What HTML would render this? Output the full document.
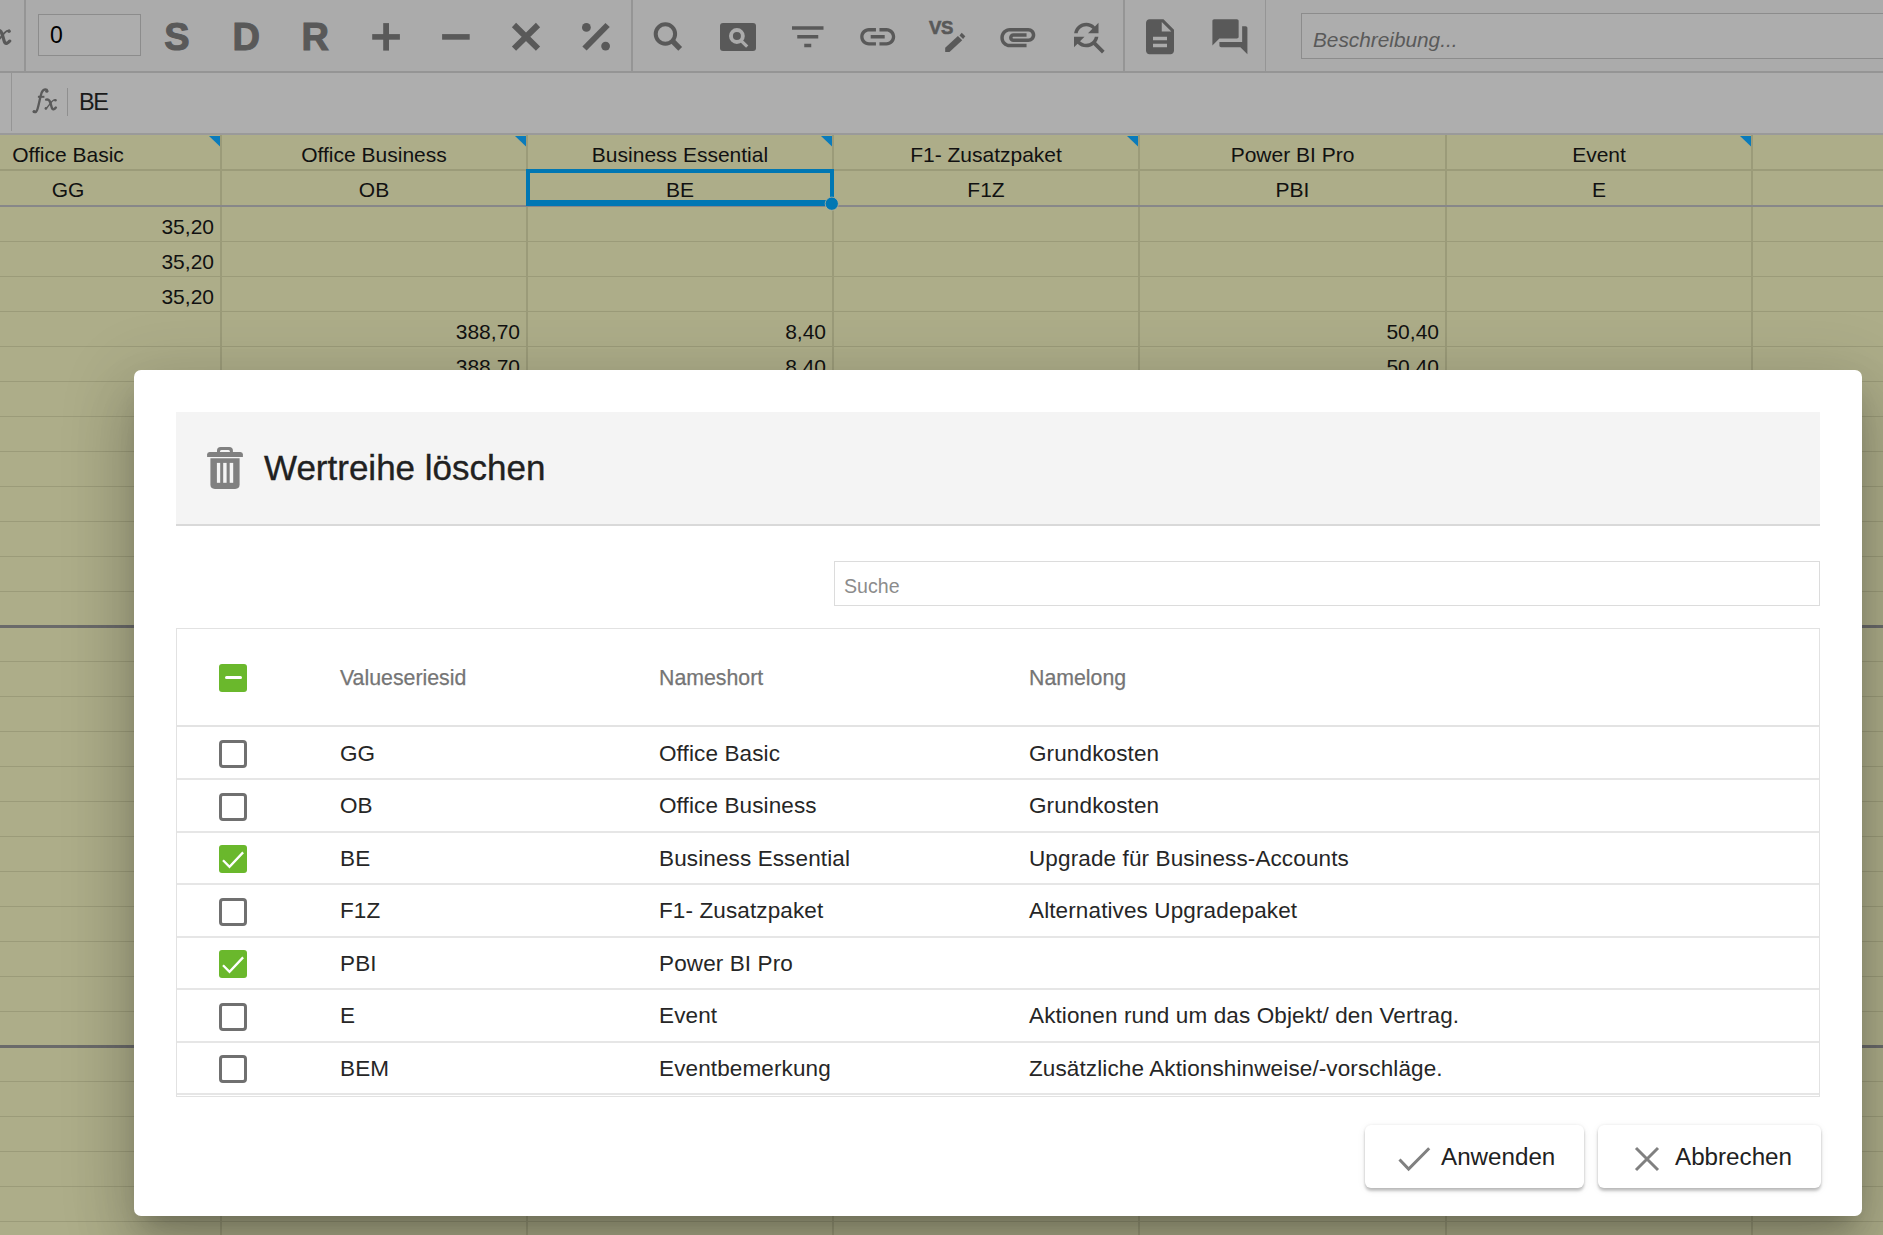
<!DOCTYPE html>
<html><head><meta charset="utf-8">
<style>
html,body{margin:0;padding:0;}
body{width:1883px;height:1235px;overflow:hidden;position:relative;background:#adad89;font-family:"Liberation Sans",sans-serif;}
.a{position:absolute;}
.t{position:absolute;white-space:nowrap;}
svg{position:absolute;overflow:visible;}
</style></head><body>
<div class="a" style="left:0;top:0;width:1883px;height:71px;background:#ababab;border-bottom:2px solid #959595"></div>
<div class="a" style="left:24px;top:0;width:2px;height:71px;background:#959595"></div>
<div class="a" style="left:631px;top:0;width:2px;height:71px;background:#959595"></div>
<div class="a" style="left:1123px;top:0;width:2px;height:71px;background:#959595"></div>
<div class="a" style="left:1265px;top:0;width:1.3px;height:71px;background:#959595"></div>
<svg style="left:0;top:0" width="1" height="1"><g transform="translate(-4.4 29.9) scale(1.33) translate(-45.3 -99.2)"><path d="M46.2 99.6 Q48.3 99.0 49.4 100.6 Q50.6 103 51.6 107 Q52.3 109.6 53.6 109.3 Q54.8 109 55.9 107.6" stroke="#595959" stroke-width="2.4" fill="none" stroke-linecap="round"/><path d="M55.6 99.6 Q53.6 99.6 51.8 101.6 L47.6 106.8 Q46.6 108.4 45.6 108.6" stroke="#595959" stroke-width="1.4" fill="none" stroke-linecap="round"/><circle cx="55.4" cy="100.2" r="1.3" fill="#595959"/><circle cx="45.9" cy="108.4" r="1.3" fill="#595959"/></g></svg>
<div class="a" style="left:38px;top:14px;width:101px;height:40px;border:1px solid #8c8c8c;background:#adadad"></div>
<div class="t" style="left:50px;top:19.93px;font-size:23px;line-height:30px;color:#000;">0</div>
<div class="t" style="left:164.2px;top:12.83px;font-size:38px;line-height:49px;color:#595959;font-weight:bold;-webkit-text-stroke:1.1px #595959;">S</div>
<div class="t" style="left:232.4px;top:12.83px;font-size:38px;line-height:49px;color:#595959;font-weight:bold;-webkit-text-stroke:1.1px #595959;">D</div>
<div class="t" style="left:301.6px;top:12.83px;font-size:38px;line-height:49px;color:#595959;font-weight:bold;-webkit-text-stroke:1.1px #595959;">R</div>
<svg style="left:0;top:0" width="1883" height="73"><g fill="#595959"><rect x="383.2" y="23.1" width="5.8" height="27.5"/><rect x="372.2" y="34.1" width="27.7" height="5.6"/><rect x="442.1" y="34.1" width="27.6" height="5.6"/></g><g stroke="#595959" stroke-width="6" fill="none"><path d="M514 25 L538 48.6 M538 25 L514 48.6"/><path d="M584.5 48.5 L607.6 25"/></g><g fill="#595959"><circle cx="586.4" cy="27.4" r="4.4"/><circle cx="605.6" cy="46.1" r="4.4"/></g></svg>
<svg style="left:0;top:0" width="1" height="1"><circle cx="665.4" cy="34" r="9.7" stroke="#595959" stroke-width="4" fill="none"/><path d="M672.6 41.2 L680.2 48.8" stroke="#595959" stroke-width="5.4"/></svg>
<div class="a" style="left:720.2px;top:23px;width:35.4px;height:28px;background:#595959;border-radius:3px"></div>
<svg style="left:0;top:0" width="1" height="1"><circle cx="736.9" cy="36" r="5.95" stroke="#ababab" stroke-width="3.9" fill="none"/><path d="M741.3 40.8 L747.2 46.7" stroke="#ababab" stroke-width="3.2"/></svg>
<svg style="left:0;top:0" width="1" height="1"><path transform="translate(786.75 15.8) scale(1.75)" d="M10 18h4v-2h-4v2zM3 6v2h18V6H3zm3 7h12v-2H6v2z" fill="#595959"/></svg>
<svg style="left:0;top:0" width="1" height="1"><path transform="translate(856.7 15.85) scale(1.75)" d="M3.9 12c0-1.71 1.39-3.1 3.1-3.1h4V7H7c-2.76 0-5 2.24-5 5s2.24 5 5 5h4v-1.9H7c-1.71 0-3.1-1.39-3.1-3.1zM8 13h8v-2H8v2zm9-6h-4v1.9h4c1.71 0 3.1 1.39 3.1 3.1s-1.39 3.1-3.1 3.1h-4V17h4c2.76 0 5-2.24 5-5s-2.24-5-5-5z" fill="#595959"/></svg>
<div class="t" style="left:929px;top:16.49px;font-size:18.5px;line-height:24px;color:#595959;font-weight:bold;letter-spacing:-0.3px;-webkit-text-stroke:0.6px #595959;">VS</div>
<svg style="left:0;top:0" width="1" height="1"><path d="M945.2 47.8 L957.9 36.0 L962.2 40.3 L949.5 52 L945.2 52 Z" fill="#595959"/><path d="M961.7 32.8 L965.3 36.2 L963.1 38.9 L959.5 35.4 Z" fill="#595959"/></svg>
<svg style="left:0;top:0" width="1" height="1"><path transform="translate(996.8 15.85) scale(1.75)" d="M2 12.5C2 9.46 4.46 7 7.5 7H18c2.21 0 4 1.79 4 4s-1.79 4-4 4H9.5C8.12 15 7 13.88 7 12.5S8.12 10 9.5 10H17v2H9.41c-.55 0-.55 1 0 1H18c1.1 0 2-.9 2-2s-.9-2-2-2H7.5C5.57 9 4 10.57 4 12.5S5.57 16 7.5 16H17v2H7.5C4.46 18 2 15.54 2 12.5z" fill="#595959"/></svg>
<svg style="left:0;top:0" width="1" height="1"><path transform="translate(1067 15.8) scale(1.75)" d="M11 6c1.38 0 2.63.56 3.54 1.46L12 10h6V4l-2.05 2.05C14.68 4.78 12.93 4 11 4c-3.53 0-6.43 2.61-6.92 6H6.1c.46-2.28 2.48-4 4.9-4zm5.64 9.14c.66-.9 1.12-1.97 1.28-3.14H15.9c-.46 2.28-2.48 4-4.9 4-1.38 0-2.630-.56-3.54-1.46L10 12H4v6l2.05-2.05C7.32 17.22 9.07 18 11 18c1.55 0 2.98-.51 4.14-1.36L20 21.49 21.49 20l-4.85-4.86z" fill="#595959"/></svg>
<svg style="left:0;top:0" width="1" height="1"><path transform="translate(1139 15.8) scale(1.75)" d="M14 2H6c-1.1 0-1.99.9-1.99 2L4 20c0 1.1.89 2 1.99 2H18c1.1 0 2-.9 2-2V8l-6-6zm2 16H8v-2h8v2zm0-4H8v-2h8v2zm-3-5V3.5L18.5 9H13z" fill="#595959"/></svg>
<svg style="left:0;top:0" width="1" height="1"><path transform="translate(1208.9 15.8) scale(1.75)" d="M21 6h-2v9H6v2c0 .55.45 1 1 1h11l4 4V7c0-.55-.45-1-1-1zm-4 6V3c0-.55-.45-1-1-1H3c-.55 0-1 .45-1 1v14l4-4h10c.55 0 1-.45 1-1z" fill="#595959"/></svg>
<div class="a" style="left:1301px;top:13px;width:600px;height:44px;border:1px solid #8c8c8c;background:#adadad"></div>
<div class="t" style="left:1313px;top:25.89px;font-size:20.8px;line-height:27px;color:#5a5a5a;font-style:italic;">Beschreibung...</div>
<div class="a" style="left:0;top:73px;width:1883px;height:60px;background:#aeaeae;border-bottom:2px solid #9a9a9a"></div>
<div class="a" style="left:11px;top:73px;width:1px;height:58px;background:#959595"></div>
<svg style="left:0;top:0" width="1" height="1"><path d="M46.2 99.6 Q48.3 99.0 49.4 100.6 Q50.6 103 51.6 107 Q52.3 109.6 53.6 109.3 Q54.8 109 55.9 107.6" stroke="#5a5a5a" stroke-width="2.4" fill="none" stroke-linecap="round"/><path d="M55.6 99.6 Q53.6 99.6 51.8 101.6 L47.6 106.8 Q46.6 108.4 45.6 108.6" stroke="#5a5a5a" stroke-width="1.4" fill="none" stroke-linecap="round"/><circle cx="55.4" cy="100.2" r="1.3" fill="#5a5a5a"/><circle cx="45.9" cy="108.4" r="1.3" fill="#5a5a5a"/><path d="M33.8 111.8 Q36.4 113.2 37.6 108.8 Q38.6 105 39.6 100.4 Q40.6 95.4 41.6 92.8 Q43 89.4 45.4 89.4 Q47 89.4 47.2 90.6" stroke="#5a5a5a" stroke-width="2.3" fill="none" stroke-linecap="round"/><circle cx="34.2" cy="111.6" r="1.6" fill="#5a5a5a"/><circle cx="46.8" cy="91.2" r="1.6" fill="#5a5a5a"/><path d="M37.9 96.8 L44.4 96.8" stroke="#5a5a5a" stroke-width="2" fill="none"/></svg>
<div class="a" style="left:67px;top:88px;width:1px;height:28px;background:#8f8f8f"></div>
<div class="t" style="left:79px;top:87.16px;font-size:23.5px;line-height:31px;color:#1a1a1a;letter-spacing:-1.5px;">BE</div>
<div class="a" style="left:0;top:135px;width:1883px;height:1100px;background:#adad89"></div>
<div class="a" style="left:0;top:169px;width:1883px;height:2px;background:#9b9b79"></div>
<div class="a" style="left:0;top:241px;width:1883px;height:1px;background:#9b9b79"></div>
<div class="a" style="left:0;top:276px;width:1883px;height:1px;background:#9b9b79"></div>
<div class="a" style="left:0;top:311px;width:1883px;height:1px;background:#9b9b79"></div>
<div class="a" style="left:0;top:346px;width:1883px;height:1px;background:#9b9b79"></div>
<div class="a" style="left:0;top:381px;width:1883px;height:1px;background:#9b9b79"></div>
<div class="a" style="left:0;top:416px;width:1883px;height:1px;background:#9b9b79"></div>
<div class="a" style="left:0;top:451px;width:1883px;height:1px;background:#9b9b79"></div>
<div class="a" style="left:0;top:486px;width:1883px;height:1px;background:#9b9b79"></div>
<div class="a" style="left:0;top:521px;width:1883px;height:1px;background:#9b9b79"></div>
<div class="a" style="left:0;top:556px;width:1883px;height:1px;background:#9b9b79"></div>
<div class="a" style="left:0;top:591px;width:1883px;height:1px;background:#9b9b79"></div>
<div class="a" style="left:0;top:625px;width:1883px;height:3px;background:#6a6a6a"></div>
<div class="a" style="left:0;top:661px;width:1883px;height:1px;background:#9b9b79"></div>
<div class="a" style="left:0;top:696px;width:1883px;height:1px;background:#9b9b79"></div>
<div class="a" style="left:0;top:731px;width:1883px;height:1px;background:#9b9b79"></div>
<div class="a" style="left:0;top:766px;width:1883px;height:1px;background:#9b9b79"></div>
<div class="a" style="left:0;top:801px;width:1883px;height:1px;background:#9b9b79"></div>
<div class="a" style="left:0;top:836px;width:1883px;height:1px;background:#9b9b79"></div>
<div class="a" style="left:0;top:871px;width:1883px;height:1px;background:#9b9b79"></div>
<div class="a" style="left:0;top:906px;width:1883px;height:1px;background:#9b9b79"></div>
<div class="a" style="left:0;top:941px;width:1883px;height:1px;background:#9b9b79"></div>
<div class="a" style="left:0;top:976px;width:1883px;height:1px;background:#9b9b79"></div>
<div class="a" style="left:0;top:1011px;width:1883px;height:1px;background:#9b9b79"></div>
<div class="a" style="left:0;top:1045px;width:1883px;height:3px;background:#6a6a6a"></div>
<div class="a" style="left:0;top:1081px;width:1883px;height:1px;background:#9b9b79"></div>
<div class="a" style="left:0;top:1116px;width:1883px;height:1px;background:#9b9b79"></div>
<div class="a" style="left:0;top:1151px;width:1883px;height:1px;background:#9b9b79"></div>
<div class="a" style="left:0;top:1186px;width:1883px;height:1px;background:#9b9b79"></div>
<div class="a" style="left:0;top:1221px;width:1883px;height:1px;background:#9b9b79"></div>
<div class="a" style="left:220px;top:135px;width:2px;height:1100px;background:#9b9b79"></div>
<div class="a" style="left:526px;top:135px;width:2px;height:1100px;background:#9b9b79"></div>
<div class="a" style="left:832px;top:135px;width:2px;height:1100px;background:#9b9b79"></div>
<div class="a" style="left:1138px;top:135px;width:2px;height:1100px;background:#9b9b79"></div>
<div class="a" style="left:1445px;top:135px;width:2px;height:1100px;background:#9b9b79"></div>
<div class="a" style="left:1751px;top:135px;width:2px;height:1100px;background:#9b9b79"></div>
<div class="a" style="left:0;top:205px;width:1883px;height:2px;background:#878789"></div>
<svg style="left:0;top:0" width="1" height="1"><path d="M209 136 L220 136 L220 146.5 Z" fill="#0a7bbb"/></svg>
<svg style="left:0;top:0" width="1" height="1"><path d="M515 136 L526 136 L526 146.5 Z" fill="#0a7bbb"/></svg>
<svg style="left:0;top:0" width="1" height="1"><path d="M821 136 L832 136 L832 146.5 Z" fill="#0a7bbb"/></svg>
<svg style="left:0;top:0" width="1" height="1"><path d="M1127 136 L1138 136 L1138 146.5 Z" fill="#0a7bbb"/></svg>
<svg style="left:0;top:0" width="1" height="1"><path d="M1740 136 L1751 136 L1751 146.5 Z" fill="#0a7bbb"/></svg>
<div class="t" style="left:-932.0px;width:2000px;text-align:center;top:141.22px;font-size:21px;line-height:27px;color:#111;">Office Basic</div>
<div class="t" style="left:-932.0px;width:2000px;text-align:center;top:175.72px;font-size:21px;line-height:27px;color:#111;">GG</div>
<div class="t" style="left:-626.0px;width:2000px;text-align:center;top:141.22px;font-size:21px;line-height:27px;color:#111;">Office Business</div>
<div class="t" style="left:-626.0px;width:2000px;text-align:center;top:175.72px;font-size:21px;line-height:27px;color:#111;">OB</div>
<div class="t" style="left:-320.0px;width:2000px;text-align:center;top:141.22px;font-size:21px;line-height:27px;color:#111;">Business Essential</div>
<div class="t" style="left:-320.0px;width:2000px;text-align:center;top:175.72px;font-size:21px;line-height:27px;color:#111;">BE</div>
<div class="t" style="left:-14.0px;width:2000px;text-align:center;top:141.22px;font-size:21px;line-height:27px;color:#111;">F1- Zusatzpaket</div>
<div class="t" style="left:-14.0px;width:2000px;text-align:center;top:175.72px;font-size:21px;line-height:27px;color:#111;">F1Z</div>
<div class="t" style="left:292.5px;width:2000px;text-align:center;top:141.22px;font-size:21px;line-height:27px;color:#111;">Power BI Pro</div>
<div class="t" style="left:292.5px;width:2000px;text-align:center;top:175.72px;font-size:21px;line-height:27px;color:#111;">PBI</div>
<div class="t" style="left:599.0px;width:2000px;text-align:center;top:141.22px;font-size:21px;line-height:27px;color:#111;">Event</div>
<div class="t" style="left:599.0px;width:2000px;text-align:center;top:175.72px;font-size:21px;line-height:27px;color:#111;">E</div>
<div class="t" style="left:-1786px;width:2000px;text-align:right;top:213.22px;font-size:21px;line-height:27px;color:#111;">35,20</div>
<div class="t" style="left:-1786px;width:2000px;text-align:right;top:248.22px;font-size:21px;line-height:27px;color:#111;">35,20</div>
<div class="t" style="left:-1786px;width:2000px;text-align:right;top:283.22px;font-size:21px;line-height:27px;color:#111;">35,20</div>
<div class="t" style="left:-1480px;width:2000px;text-align:right;top:318.22px;font-size:21px;line-height:27px;color:#111;">388,70</div>
<div class="t" style="left:-1174px;width:2000px;text-align:right;top:318.22px;font-size:21px;line-height:27px;color:#111;">8,40</div>
<div class="t" style="left:-561px;width:2000px;text-align:right;top:318.22px;font-size:21px;line-height:27px;color:#111;">50,40</div>
<div class="t" style="left:-1480px;width:2000px;text-align:right;top:353.22px;font-size:21px;line-height:27px;color:#111;">388,70</div>
<div class="t" style="left:-1174px;width:2000px;text-align:right;top:353.22px;font-size:21px;line-height:27px;color:#111;">8,40</div>
<div class="t" style="left:-561px;width:2000px;text-align:right;top:353.22px;font-size:21px;line-height:27px;color:#111;">50,40</div>
<div class="a" style="left:526px;top:169px;width:300px;height:27px;border:4px solid #0077b3;border-bottom-width:6px"></div>
<svg style="left:0;top:0" width="1" height="1"><circle cx="831.8" cy="203.7" r="6.6" fill="#0077b3" stroke="#b9b49a" stroke-width="0.8"/></svg>
<div class="a" style="left:134px;top:370px;width:1728px;height:846px;background:#fff;border-radius:7px;box-shadow:0 16.5px 22.5px -10.5px rgba(0,0,0,.2),0 36px 57px 4.5px rgba(0,0,0,.14),0 13.5px 69px 12px rgba(0,0,0,.12)"></div>
<div class="a" style="left:176px;top:412px;width:1644px;height:112px;background:#f4f4f4;border-bottom:2px solid #d9d9d9"></div>
<svg style="left:0;top:0" width="1" height="1"><g fill="#808080"><path d="M217 452 L217 450.4 Q217 446.9 220.6 446.9 L229.3 446.9 Q232.9 446.9 232.9 450.4 L232.9 452 L230 452 Q230 450 228.4 450 L221.5 450 Q219.9 450 219.9 452 Z"/><path d="M209.5 452 L240.5 452 Q242.9 452 242.9 454.5 L242.9 456.9 L207.1 456.9 L207.1 454.5 Q207.1 452 209.5 452 Z"/><path d="M210.4 458.2 L239.6 458.2 L239.6 484.5 Q239.6 488.9 235.2 488.9 L214.8 488.9 Q210.4 488.9 210.4 484.5 Z"/></g><g fill="#f4f4f4"><rect x="216.9" y="462.9" width="3.3" height="19.9"/><rect x="223.2" y="462.9" width="3.4" height="19.9"/><rect x="229.7" y="462.9" width="3.5" height="19.9"/></g></svg>
<div class="t" style="left:264px;top:445.37px;font-size:35px;line-height:46px;color:#212121;-webkit-text-stroke:0.35px #212121;">Wertreihe löschen</div>
<div class="a" style="left:834px;top:561px;width:984px;height:43px;border:1px solid #dcdcdc;background:#fff"></div>
<div class="t" style="left:844px;top:573.71px;font-size:19.6px;line-height:25px;color:#8c8c8c;">Suche</div>
<div class="a" style="left:176px;top:628px;width:1642px;height:467px;border:1px solid #e2e2e2"></div>
<div class="a" style="left:177px;top:725px;width:1642px;height:2px;background:#e3e3e3"></div>
<div class="a" style="left:219px;top:664px;width:28px;height:28px;background:#6ab82c;border-radius:3px"></div>
<div class="a" style="left:225px;top:676px;width:17px;height:3px;background:#fff;border-radius:1.5px"></div>
<div class="t" style="left:340px;top:663.62px;font-size:21.3px;line-height:28px;color:#757575;-webkit-text-stroke:0.25px #757575;">Valueseriesid</div>
<div class="t" style="left:659px;top:663.62px;font-size:21.3px;line-height:28px;color:#757575;-webkit-text-stroke:0.25px #757575;">Nameshort</div>
<div class="t" style="left:1029px;top:663.62px;font-size:21.3px;line-height:28px;color:#757575;-webkit-text-stroke:0.25px #757575;">Namelong</div>
<div class="a" style="left:219px;top:740.0px;width:22px;height:22px;border:3px solid #707070;border-radius:4px"></div>
<div class="t" style="left:340px;top:738.70px;font-size:22.5px;line-height:29px;color:#262626;letter-spacing:0.12px;">GG</div>
<div class="t" style="left:659px;top:738.70px;font-size:22.5px;line-height:29px;color:#262626;letter-spacing:0.12px;">Office Basic</div>
<div class="t" style="left:1029px;top:738.70px;font-size:22.5px;line-height:29px;color:#262626;letter-spacing:0.12px;">Grundkosten</div>
<div class="a" style="left:177px;top:778.0px;width:1642px;height:2px;background:#e6e6e6"></div>
<div class="a" style="left:219px;top:792.5px;width:22px;height:22px;border:3px solid #707070;border-radius:4px"></div>
<div class="t" style="left:340px;top:791.20px;font-size:22.5px;line-height:29px;color:#262626;letter-spacing:0.12px;">OB</div>
<div class="t" style="left:659px;top:791.20px;font-size:22.5px;line-height:29px;color:#262626;letter-spacing:0.12px;">Office Business</div>
<div class="t" style="left:1029px;top:791.20px;font-size:22.5px;line-height:29px;color:#262626;letter-spacing:0.12px;">Grundkosten</div>
<div class="a" style="left:177px;top:830.5px;width:1642px;height:2px;background:#e6e6e6"></div>
<div class="a" style="left:219px;top:845.0px;width:28px;height:28px;background:#6ab82c;border-radius:3px"></div>
<svg style="left:0;top:0" width="1" height="1"><path d="M223 860.3 L229.5 866.8 L243.1 852.4" stroke="#fff" stroke-width="2.3" fill="none"/></svg>
<div class="t" style="left:340px;top:843.70px;font-size:22.5px;line-height:29px;color:#262626;letter-spacing:0.12px;">BE</div>
<div class="t" style="left:659px;top:843.70px;font-size:22.5px;line-height:29px;color:#262626;letter-spacing:0.12px;">Business Essential</div>
<div class="t" style="left:1029px;top:843.70px;font-size:22.5px;line-height:29px;color:#262626;letter-spacing:0.12px;">Upgrade für Business-Accounts</div>
<div class="a" style="left:177px;top:883.0px;width:1642px;height:2px;background:#e6e6e6"></div>
<div class="a" style="left:219px;top:897.5px;width:22px;height:22px;border:3px solid #707070;border-radius:4px"></div>
<div class="t" style="left:340px;top:896.20px;font-size:22.5px;line-height:29px;color:#262626;letter-spacing:0.12px;">F1Z</div>
<div class="t" style="left:659px;top:896.20px;font-size:22.5px;line-height:29px;color:#262626;letter-spacing:0.12px;">F1- Zusatzpaket</div>
<div class="t" style="left:1029px;top:896.20px;font-size:22.5px;line-height:29px;color:#262626;letter-spacing:0.12px;">Alternatives Upgradepaket</div>
<div class="a" style="left:177px;top:935.5px;width:1642px;height:2px;background:#e6e6e6"></div>
<div class="a" style="left:219px;top:950.0px;width:28px;height:28px;background:#6ab82c;border-radius:3px"></div>
<svg style="left:0;top:0" width="1" height="1"><path d="M223 965.3 L229.5 971.8 L243.1 957.4" stroke="#fff" stroke-width="2.3" fill="none"/></svg>
<div class="t" style="left:340px;top:948.70px;font-size:22.5px;line-height:29px;color:#262626;letter-spacing:0.12px;">PBI</div>
<div class="t" style="left:659px;top:948.70px;font-size:22.5px;line-height:29px;color:#262626;letter-spacing:0.12px;">Power BI Pro</div>
<div class="a" style="left:177px;top:988.0px;width:1642px;height:2px;background:#e6e6e6"></div>
<div class="a" style="left:219px;top:1002.5px;width:22px;height:22px;border:3px solid #707070;border-radius:4px"></div>
<div class="t" style="left:340px;top:1001.20px;font-size:22.5px;line-height:29px;color:#262626;letter-spacing:0.12px;">E</div>
<div class="t" style="left:659px;top:1001.20px;font-size:22.5px;line-height:29px;color:#262626;letter-spacing:0.12px;">Event</div>
<div class="t" style="left:1029px;top:1001.20px;font-size:22.5px;line-height:29px;color:#262626;letter-spacing:0.12px;">Aktionen rund um das Objekt/ den Vertrag.</div>
<div class="a" style="left:177px;top:1040.5px;width:1642px;height:2px;background:#e6e6e6"></div>
<div class="a" style="left:219px;top:1055.0px;width:22px;height:22px;border:3px solid #707070;border-radius:4px"></div>
<div class="t" style="left:340px;top:1053.70px;font-size:22.5px;line-height:29px;color:#262626;letter-spacing:0.12px;">BEM</div>
<div class="t" style="left:659px;top:1053.70px;font-size:22.5px;line-height:29px;color:#262626;letter-spacing:0.12px;">Eventbemerkung</div>
<div class="t" style="left:1029px;top:1053.70px;font-size:22.5px;line-height:29px;color:#262626;letter-spacing:0.12px;">Zusätzliche Aktionshinweise/-vorschläge.</div>
<div class="a" style="left:177px;top:1093px;width:1642px;height:2px;background:#e6e6e6"></div>
<div class="a" style="left:1365px;top:1125px;width:219px;height:63px;background:#fff;border-radius:6px;box-shadow:0 3px 3px rgba(0,0,0,0.22),0 0 3px rgba(0,0,0,0.08),0 2px 10px rgba(0,0,0,0.06)"></div>
<div class="t" style="left:1441px;top:1140.91px;font-size:24.2px;line-height:31px;color:#212121;">Anwenden</div>
<div class="a" style="left:1598px;top:1125px;width:223px;height:63px;background:#fff;border-radius:6px;box-shadow:0 3px 3px rgba(0,0,0,0.22),0 0 3px rgba(0,0,0,0.08),0 2px 10px rgba(0,0,0,0.06)"></div>
<div class="t" style="left:1675px;top:1140.91px;font-size:24.2px;line-height:31px;color:#212121;">Abbrechen</div>
<svg style="left:0;top:0" width="1" height="1"><path d="M1399.5 1159.5 L1408.6 1169 L1429.2 1148.2" stroke="#808080" stroke-width="3" fill="none"/><path d="M1636 1148 L1658 1170 M1658 1148 L1636 1170" stroke="#808080" stroke-width="3" fill="none"/></svg>
</body></html>
